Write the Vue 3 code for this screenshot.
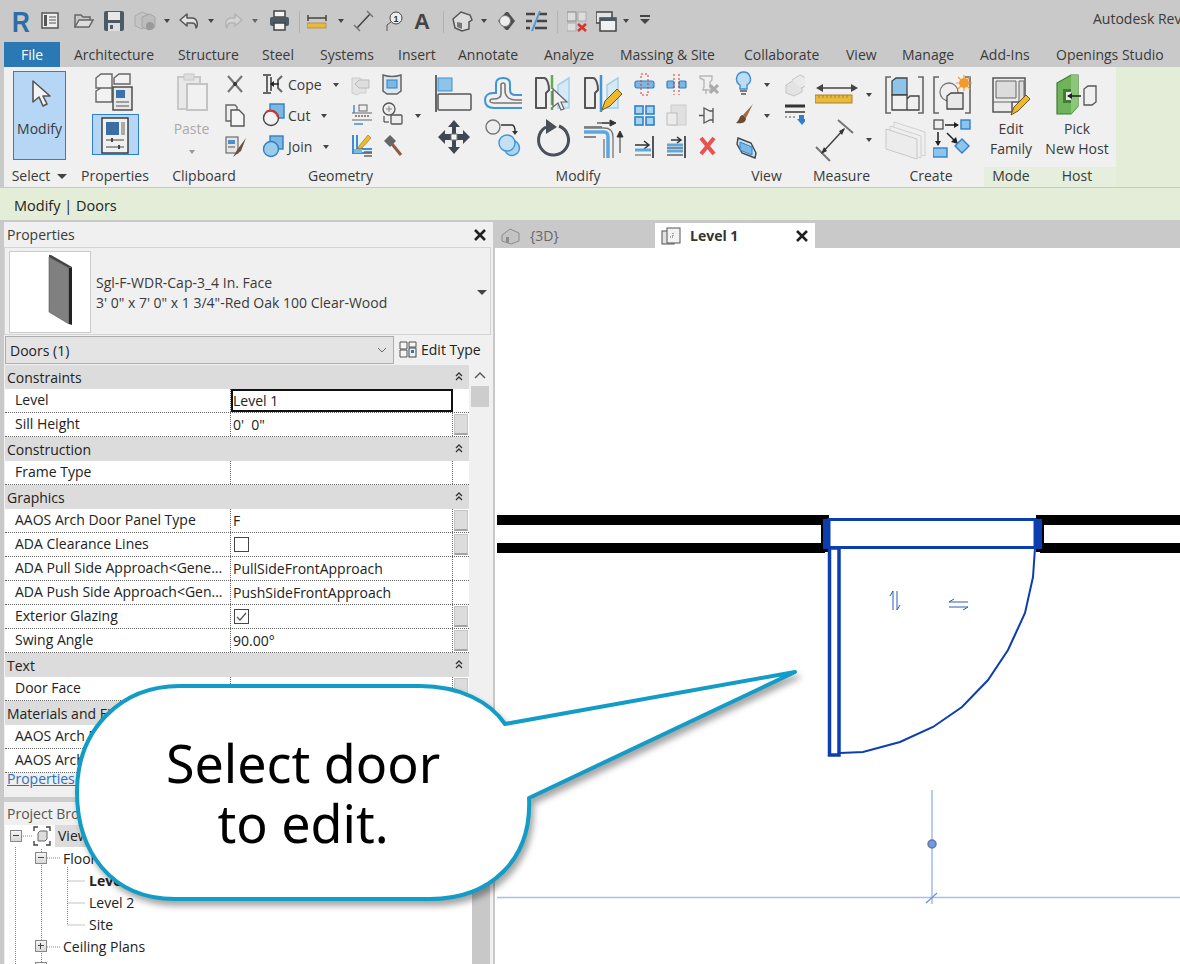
<script setup>
// left edge of each ribbon tab, the tab gets the distance to the next one as width
const tabStarts = [
  ["Architecture", 74], ["Structure", 178], ["Steel", 262], ["Systems", 320], ["Insert", 398], ["Annotate", 458],
  ["Analyze", 544], ["Massing & Site", 620], ["Collaborate", 744], ["View", 846], ["Manage", 902], ["Add-Ins", 980],
  ["Openings Studio", 1056],
];
const tabs = tabStarts.map(([label, x], i) => ({
  label,
  width: (i + 1 < tabStarts.length ? tabStarts[i + 1][1] : 1180) - x,
}));

const rows = [
  { group: "Constraints" },
  { name: "Level", value: "Level 1", active: true },
  { name: "Sill Height", value: "0'  0\"", btn: true },
  { group: "Construction" },
  { name: "Frame Type", value: "" },
  { group: "Graphics" },
  { name: "AAOS Arch Door Panel Type", value: "F", btn: true },
  { name: "ADA Clearance Lines", check: "off", btn: true },
  { name: "ADA Pull Side Approach<Gene...", value: "PullSideFrontApproach" },
  { name: "ADA Push Side Approach<Gen...", value: "PushSideFrontApproach" },
  { name: "Exterior Glazing", check: "on", btn: true },
  { name: "Swing Angle", value: "90.00°", btn: true },
  { group: "Text" },
  { name: "Door Face", value: "", btn: true },
  { group: "Materials and Finishes" },
  { name: "AAOS Arch Door Finish", value: "" },
  { name: "AAOS Arch Frame Finish", value: "" },
];
</script>

<template>
  <div class="app">
    <!-- quick access toolbar -->
    <div class="qat">
      <svg width="29" height="24"><text class="logo" x="0" y="23" transform="scale(.82 1)">R</text></svg>
      <svg width="33" height="24"><rect x="1" y="4" width="16" height="15" fill="#eee" stroke="#555" stroke-width="1.5"/><path d="M3 6h3v11H3z" fill="#555"/><path d="M8 8h7M8 11h7M8 14h7" stroke="#555"/></svg>
      <svg width="30" height="24"><path d="M1 18V6h6l2 2h7v3" fill="none" stroke="#666" stroke-width="1.5"/><path d="M1 18l4-7h14l-4 7z" fill="#ddd" stroke="#666" stroke-width="1.5"/></svg>
      <svg width="30" height="24"><rect x="0" y="2" width="20" height="20" rx="2" fill="#4c5a66"/><rect x="4" y="3" width="12" height="8" fill="#e8e8e8"/><rect x="4" y="14" width="12" height="8" fill="#ddd"/><rect x="6" y="16" width="3" height="4" fill="#4c5a66"/></svg>
      <svg width="30" height="24"><path d="M1 7l7-4 7 3v10l-7 4-7-3z" fill="#c4c4c4" stroke="#aaa"/><path d="M8 8l8-3 5 3v10l-6 3-7-3z" fill="#bcbcbc" stroke="#a5a5a5"/><circle cx="16" cy="17" r="4" fill="#999"/></svg>
      <svg width="15" height="24"><path d="M0 10h6l-3 4z" fill="#444"/></svg>
      <svg width="29" height="24"><path d="M8 5L1 11l7 6v-3h5c3 0 4 2 4 5 2-2 2-10-4-10H8z" fill="#e2e2e2" stroke="#555" stroke-width="1.5" stroke-linejoin="round"/></svg>
      <svg width="17" height="24"><path d="M0 10h6l-3 4z" fill="#444"/></svg>
      <svg width="27" height="24"><path d="M10 5l7 6-7 6v-3H6c-3 0-4 2-4 5-2-2-2-10 4-10h4z" fill="#d4d4d4" stroke="#b4b4b4" stroke-width="1.5" stroke-linejoin="round"/></svg>
      <svg width="17" height="24"><path d="M0 10h6l-3 4z" fill="#666"/></svg>
      <svg width="30" height="24"><rect x="5" y="2" width="11" height="6" fill="#f4f4f4" stroke="#444" stroke-width="1.5"/><rect x="1" y="8" width="19" height="9" rx="2" fill="#4c5a66"/><rect x="5" y="14" width="11" height="7" fill="#f4f4f4" stroke="#444" stroke-width="1.5"/></svg>
      <svg width="8" height="24"><path d="M.5 2v28" stroke="#b2b2b2"/></svg>
      <svg width="31" height="24"><path d="M1 9h18M1 6v6M19 6v6" stroke="#444" stroke-width="1.5"/><rect x="0" y="14" width="19" height="5" fill="#e8b93a" stroke="#a78328" stroke-width=".7"/></svg>
      <svg width="15" height="24"><path d="M0 10h6l-3 4z" fill="#444"/></svg>
      <svg width="32" height="24"><path d="M4 19L17 5" stroke="#444" stroke-width="1.5"/><path d="M1 16l6 6M14 2l6 6" stroke="#777" stroke-width="1.5"/></svg>
      <svg width="29" height="24"><circle cx="11" cy="9" r="6" fill="#eee" stroke="#444"/><text class="tag" x="11" y="12.500">1</text><path d="M6 13l-4 3v6" fill="none" stroke="#555"/></svg>
      <svg width="29" height="24"><text class="big-a" x="0" y="20">A</text></svg>
      <svg width="9" height="24"><path d="M.5 2v28" stroke="#b2b2b2"/></svg>
      <svg width="29" height="24"><path d="M1 10l8-7 9 3 2 5-3 2v7l-7 2-7-3z" fill="#ddd" stroke="#555" stroke-width="1.5"/><path d="M5 13v5l5 2v-6z" fill="#777"/></svg>
      <svg width="17" height="24"><path d="M0 10h6l-3 4z" fill="#444"/></svg>
      <svg width="28" height="24"><path d="M0 12L8 3h2l7 9-7 9H8z" fill="#4e4e4e"/><circle cx="7" cy="12" r="5.500" fill="#eee" stroke="#777"/></svg>
      <svg width="31" height="24"><path d="M0 5h9M13 5h8M0 12h6M11 12h10M0 19h4M9 19h12" stroke="#444" stroke-width="2.500"/><path d="M14 2L6 22" stroke="#4b9bdb" stroke-width="2"/></svg>
      <svg width="10" height="24"><path d="M.5 2v28" stroke="#b2b2b2"/></svg>
      <svg width="29" height="24"><rect x="0" y="3" width="9" height="9" fill="#ddd" stroke="#888"/><rect x="11" y="3" width="8" height="9" fill="#ddd" stroke="#aaa"/><rect x="0" y="14" width="9" height="8" fill="#ddd" stroke="#aaa"/><path d="M11 15l8 7M19 15l-8 7" stroke="#d7322b" stroke-width="2.500"/></svg>
      <svg width="27" height="24"><rect x="0" y="3" width="16" height="11" fill="#e4e4e4" stroke="#444" stroke-width="1.500"/><rect x="4" y="9" width="16" height="13" fill="#f0f0f0" stroke="#444" stroke-width="1.500"/><path d="M4 9h16v3H4z" fill="#4c5a66"/></svg>
      <svg width="17" height="24"><path d="M0 10h6l-3 4z" fill="#444"/></svg>
      <svg width="12" height="24"><path d="M0 7h10" stroke="#444" stroke-width="2"/><path d="M0 10h10l-5 5z" fill="#444"/></svg>
      <span class="title">Autodesk Revit</span>
    </div>

    <!-- ribbon tabs -->
    <nav class="tabs">
      <span class="file">File</span>
      <span v-for="tab in tabs" :key="tab.label" class="tab" :style="{ width: tab.width + 'px' }">{{ tab.label }}</span>
    </nav>

    <!-- ribbon -->
    <div class="ribbon">
      <section class="panel p-select">
        <div class="body">
          <div class="modify-btn">
            <svg width="24" height="34"><path d="M5 5v21l6-5 4 9 4-2-4-8h7z" fill="#f4f4f4" stroke="#555" stroke-width="1.6" stroke-linejoin="round"/></svg>
            <span>Modify</span>
          </div>
        </div>
        <div class="label">Select<i class="dd caret"></i></div>
      </section>

      <section class="panel p-props">
        <div class="body col-center">
          <svg width="40" height="40"><path d="M1 6l5-4h11v14H1zM19 6l5-4h11v10H19zM1 19l5-3h11v14H1z" fill="#f2f2f2" stroke="#666" stroke-width="1.4"/><rect x="18" y="15" width="19" height="23" fill="#e8e8e8" stroke="#444" stroke-width="1.4"/><rect x="21" y="18" width="9" height="8" fill="#3a73ab"/><path d="M21 30h13M21 34h13" stroke="#555"/></svg>
          <div class="props-btn">
            <svg width="34" height="38"><rect x="4" y="2" width="26" height="35" fill="#f0f0f0" stroke="#333" stroke-width="1.4"/><rect x="8" y="6" width="13" height="13" fill="#3a6ea5"/><rect x="23" y="6" width="4" height="13" fill="#aaa"/><path d="M8 24h18M8 31h18" stroke="#444"/><path d="M14 22v4M21 29v4" stroke="#444" stroke-width="2"/></svg>
          </div>
        </div>
        <div class="label">Properties</div>
      </section>

      <section class="panel p-clip">
        <div class="body row">
          <div class="paste">
            <svg width="34" height="40"><path d="M3 5h22v32H3z" fill="#e9e9e9" stroke="#c8c8c8" stroke-width="2"/><rect x="9" y="2" width="10" height="6" fill="#ddd" stroke="#c8c8c8"/><path d="M12 12h20v26H12z" fill="#f1f1f1" stroke="#c4c4c4" stroke-width="2"/></svg>
            <span>Paste</span>
            <i class="dd dim"></i>
          </div>
          <div class="smalls single">
            <svg width="22" height="31"><path d="M3 7l14 16M17 7L3 23" stroke="#777" stroke-width="2.200"/><circle cx="10" cy="15" r="2" fill="#333"/></svg>
            <svg width="22" height="31"><path d="M1 5h9l2 2v14H1z" fill="#eee" stroke="#666" stroke-width="1.4"/><path d="M6 10h8l5 5v11H6z" fill="#f5f5f5" stroke="#555" stroke-width="1.4"/></svg>
            <svg width="22" height="31"><rect x="1" y="6" width="12" height="16" fill="#e6e6e6" stroke="#555"/><rect x="3" y="9" width="7" height="4" fill="#4c8fc9"/><path d="M3 16h7" stroke="#555"/><path d="M8 26l4-7 9-12-5 13z" fill="#6b5340"/></svg>
          </div>
        </div>
        <div class="label">Clipboard</div>
      </section>

      <section class="panel p-geom">
        <div class="body geom">
          <svg width="26" height="31"><path d="M1 6h8M1 24h8M5 6v18M9 8v14M20 7l-4 4v8l4 4" fill="none" stroke="#666" stroke-width="2"/><path d="M9 15h8" stroke="#222" stroke-width="1.5"/><path d="M8 15l4-3v6z" fill="#222"/></svg>
          <span class="g-text">Cope<i class="dd"></i></span>
          <svg width="31" height="31"><path d="M1 9h8l6 5v10H9l-3 2-5-2z" fill="#e3e3e3" stroke="#ccc"/><path d="M18 11H8l-4 4 4 4h10z" fill="#dedede" stroke="#bbb"/></svg>
          <svg width="33" height="31"><path d="M1 6c6 2 12 2 18 0v16l-4 3H5l-4-3z" fill="#dbe6ef" stroke="#666" stroke-width="1.5"/><rect x="5" y="11" width="10" height="8" fill="#7db8e3" stroke="#2f7fc4"/></svg>
          <span></span>

          <svg width="26" height="31"><rect x="8" y="4" width="14" height="14" fill="#7db8e3" stroke="#2f7fc4" stroke-width="1.4"/><circle cx="9" cy="18" r="7.500" fill="#f2f2f2" stroke="#444" stroke-width="1.4"/><path d="M4 12a8 8 0 0 1 12 5" fill="none" stroke="#d9342b" stroke-width="2"/></svg>
          <span class="g-text">Cut<i class="dd"></i></span>
          <svg width="31" height="31"><path d="M3 5v8" stroke="#3c8fd6" stroke-width="1.5"/><rect x="8" y="5" width="8" height="6" fill="#eee" stroke="#666"/><path d="M1 13h20M1 20h20" stroke="#666"/><path d="M4 16h14" stroke="#888" stroke-width="2" stroke-dasharray="2 1"/><path d="M3 24h9" stroke="#3c8fd6" stroke-width="1.5"/></svg>
          <svg width="33" height="31"><circle cx="7" cy="9" r="6" fill="#eee" stroke="#555" stroke-width="1.3"/><path d="M4 9h6M7 6v6" stroke="#888"/><path d="M2 16v6h5" fill="none" stroke="#333"/><rect x="9" y="15" width="11" height="9" rx="1" fill="#eee" stroke="#555" stroke-width="1.3"/></svg>
          <i class="dd"></i>

          <svg width="26" height="31"><rect x="8" y="5" width="13" height="13" fill="#7db8e3" stroke="#2f7fc4" stroke-width="1.4"/><circle cx="9" cy="18" r="7.500" fill="#9accec" stroke="#2f7fc4" stroke-width="1.4"/></svg>
          <span class="g-text">Join<i class="dd"></i></span>
          <svg width="31" height="31"><path d="M2 4v18h19M6 4v14h15" fill="none" stroke="#3c8fd6" stroke-width="2"/><path d="M3 22h8v-4H3z" fill="#7db8e3"/><path d="M8 15l9-11 3 3-9 10-4 1z" fill="#efb92e" stroke="#8a6a1c" stroke-width=".6"/><path d="M13 21h8M13 25h8" stroke="#666" stroke-width="1.5"/></svg>
          <svg width="33" height="31"><path d="M2 10l6-6 6 6-6 6z" fill="#666"/><path d="M10 13l9 11" stroke="#8c5c44" stroke-width="3"/></svg>
          <span></span>
        </div>
        <div class="label">Geometry</div>
      </section>

      <section class="panel p-modify">
        <div class="body row">
          <div class="bigs">
            <svg width="49" height="45"><path d="M1 3v37" stroke="#666" stroke-width="2"/><rect x="3" y="6" width="14" height="13" fill="#8cc4ea" stroke="#3d8fd0"/><rect x="3" y="22" width="33" height="16" rx="1" fill="#efefef" stroke="#555" stroke-width="1.5"/></svg>
            <svg width="51" height="45"><path d="M38 36H10C4 36 1 33 1 28C1 24 4 21 9 21H12V12C12 8 15 6 19 6C23 6 26 8 26 12V18C26 21 28 23 32 23H38" fill="none" stroke="#3d96d8" stroke-width="2"/><path d="M38 28H32C26 28 21 25 21 18V13C21 11 20 11 19 11C18 11 17 11 17 13V22C17 26 14 27 9 27C7 27 6 28 6 29C6 30 8 31 10 31H38" fill="none" stroke="#777" stroke-width="1.6"/></svg>
            <svg width="49" height="45"><path d="M1 6H9C12 6 14 12 14 18L11 21V36H1Z" fill="#eee" stroke="#555" stroke-width="2" stroke-linejoin="round"/><path d="M17 3v37" stroke="#5bb14e" stroke-width="2.500" stroke-dasharray="14 2 14 2 3"/><path d="M34 6L23 13V36H34Z" fill="#d5e9f6" stroke="#a3cfe8" stroke-width="1.5"/><path d="M18 17V35l5-4 3 7 3-1-3-7h6z" fill="#f2f2f2" stroke="#666" stroke-width="1.2"/></svg>
            <svg width="50" height="45"><path d="M1 6H9C12 6 14 12 14 18L11 21V36H1Z" fill="#eee" stroke="#555" stroke-width="2" stroke-linejoin="round"/><path d="M17 3v37" stroke="#3d96d8" stroke-width="2.500"/><path d="M34 6L23 13V36H34Z" fill="#d5e9f6" stroke="#a3cfe8" stroke-width="1.5"/><path d="M18 38l3-9 12-12 5 5-12 12z" fill="#efb92e" stroke="#6b5326" stroke-width="1"/></svg>

            <svg width="49" height="45"><path d="M19 3l6 7h-4v7h7v-4l7 7-7 7v-4h-7v7h4l-6 7-6-7h4v-7h-7v4l-7-7 7-7v4h7v-7h-4z" fill="#3f4750"/><rect x="16" y="17" width="6" height="6" fill="#f4f4f4" stroke="#777"/></svg>
            <svg width="51" height="45"><circle cx="9" cy="10" r="7" fill="#eee" stroke="#777" stroke-width="1.4"/><path d="M17 8H28C31 8 31 12 31 15" fill="none" stroke="#333" stroke-width="1.5"/><path d="M28 14h6l-3 4z" fill="#333"/><circle cx="28" cy="31" r="7.500" fill="#aad4ef" stroke="#3d96d8" stroke-width="1.4"/><circle cx="23" cy="26" r="8" fill="#c4e1f4" stroke="#3d96d8" stroke-width="1.4"/></svg>
            <svg width="49" height="45"><path d="M11 10a15 15 0 1 0 13-1" fill="none" stroke="#4a5058" stroke-width="3"/><path d="M11 2l11 8-11 7z" fill="#4a5058"/></svg>
            <svg width="50" height="45"><path d="M0 10h18M0 20h12M13 6h12" stroke="#666" stroke-width="1.5"/><path d="M0 15h20c3 0 4 2 4 5v21" fill="none" stroke="#5aa8e2" stroke-width="3.500"/><path d="M0 11h20c6 0 9 3 9 9v21M20 22v19" fill="none" stroke="#777" stroke-width="1.300"/><path d="M18 6h8M26 3l6 3-6 3z" fill="#333" stroke="#333"/><path d="M36 36V18M36 14l-3 6h6z" fill="#333" stroke="#333"/></svg>
          </div>
          <div class="smalls triple">
            <svg width="32" height="31"><rect x="1" y="12" width="19" height="7" rx="2" fill="#7cb6e4" stroke="#2f80c9" stroke-width="1.2"/><rect x="7" y="5" width="7" height="21" fill="none" stroke="#d9342b" stroke-dasharray="2 2"/></svg>
            <svg width="32" height="31"><rect x="1" y="12" width="7" height="7" rx="1" fill="#7cb6e4" stroke="#2f80c9" stroke-width="1.2"/><rect x="13" y="12" width="7" height="7" rx="1" fill="#7cb6e4" stroke="#2f80c9" stroke-width="1.2"/><path d="M8 5v21M13 5v21" stroke="#d9342b" stroke-dasharray="2 2"/></svg>
            <svg width="32" height="31"><path d="M2 7h12v4l-2 2v5l2 3H5l1-3v-7L2 9zM8 20v5" fill="none" stroke="#b7b7b7" stroke-width="1.4"/><path d="M12 16l8 8M20 16l-8 8" stroke="#aaa" stroke-width="3"/></svg>

            <svg width="32" height="31"><g fill="#a6d3f1" stroke="#2f80c9" stroke-width="1.6"><rect x="1" y="6" width="8" height="8"/><rect x="12" y="6" width="8" height="8"/><rect x="1" y="17" width="8" height="8"/><rect x="12" y="17" width="8" height="8"/></g></svg>
            <svg width="32" height="31"><rect x="5" y="5" width="15" height="20" fill="#e0e0e0" stroke="#ccc"/><rect x="1" y="13" width="10" height="12" fill="#ececec" stroke="#bbb"/></svg>
            <svg width="32" height="31"><path d="M6 8l6 3h3v9h-3l-6 3zM1 15.500h5M15 8v15" fill="#eee" stroke="#555" stroke-width="1.300"/></svg>

            <svg width="32" height="31"><path d="M19 5v22" stroke="#555" stroke-width="2"/><path d="M1 14h14M10 10l5 4-5 4" fill="none" stroke="#333" stroke-width="1.500"/><path d="M1 19h16" stroke="#5aa8e2" stroke-width="3"/><path d="M1 24h16" stroke="#888" stroke-width="1.500"/></svg>
            <svg width="32" height="31"><path d="M19 5v22" stroke="#555" stroke-width="2"/><path d="M5 9h10M11 6l4 3-4 3" fill="none" stroke="#333" stroke-width="1.500"/><path d="M1 14h16M1 20h16" stroke="#5aa8e2" stroke-width="3"/><path d="M1 17h16M1 24h16" stroke="#666" stroke-width="1.500"/></svg>
            <svg width="32" height="31"><path d="M3 7l13 16M16 7L3 23" stroke="#e8524f" stroke-width="4"/></svg>
          </div>
        </div>
        <div class="label">Modify</div>
      </section>

      <section class="panel p-view">
        <div class="body view-grid">
          <svg width="20" height="31"><path d="M8 3a7 7 0 0 1 4 13v4H5v-4A7 7 0 0 1 8 3z" fill="#bcdcf4" stroke="#3d8fd0" stroke-width="1.400"/><path d="M5 22h7M6 25h5" stroke="#555" stroke-width="1.500"/></svg>
          <i class="dd"></i>
          <svg width="22" height="31"><path d="M1 16l8-5 8 3v9l-8 4-8-3z" fill="#e3e3e3" stroke="#c4c4c4"/><path d="M7 11l8-5 6 3v8l-5 2" fill="#eaeaea" stroke="#c4c4c4"/></svg>

          <svg width="20" height="31"><path d="M18 4L8 15l3 3z" fill="#a8683c"/><path d="M8 15c-4 0-3 5-7 8 5 1 10 0 10-5z" fill="#6b4a33"/></svg>
          <i class="dd"></i>
          <svg width="22" height="31"><path d="M0 6h20" stroke="#333" stroke-width="3"/><path d="M0 12h20" stroke="#666" stroke-width="2"/><path d="M0 17h11" stroke="#555" stroke-dasharray="2 2"/><path d="M14 15h5v4h3l-5 6-5-6h2z" fill="#2f80c9"/></svg>

          <svg width="22" height="31"><path d="M3 7l13 5 5 10-1 5-13-5-5-9z" fill="#cbe4f5" stroke="#444" stroke-width="1.400"/><path d="M5 11l12 5v8L5 19z" fill="#7ab8e8" stroke="#2f80c9"/></svg>
        </div>
        <div class="label">View</div>
      </section>

      <section class="panel p-measure">
        <div class="body measure">
          <svg width="51" height="45"><path d="M5 16h34" stroke="#444" stroke-width="1.500"/><path d="M1 16l7-4v8zM43 16l-7-4v8z" fill="#444"/><rect x="0" y="23" width="37" height="8" fill="#e8b93a" stroke="#a78328"/><path d="M4 23v3M8 23v3M12 23v3M16 23v3M20 23v3M24 23v3M28 23v3M32 23v3" stroke="#a78328"/></svg>
          <i class="dd"></i>
          <svg width="51" height="45"><path d="M7 36L29 12" stroke="#444" stroke-width="1.500"/><path d="M1 30l14 14M23 3l15 13" stroke="#777" stroke-width="2"/><path d="M6 37l3-7 3 4zM30 11l-3 7-3-4z" fill="#333"/></svg>
          <i class="dd"></i>
        </div>
        <div class="label">Measure</div>
      </section>

      <section class="panel p-create">
        <div class="body bigs two">
          <svg width="48" height="45"><path d="M6 5H1v36h5M33 5h5v36h-5" fill="none" stroke="#666" stroke-width="1.600"/><path d="M7 23V9l4-3h11v17z" fill="#8cc4ea" stroke="#444" stroke-width="1.300"/><path d="M7 23h15v15H7zM22 27l3-3h9v14H22z" fill="#f0f0f0" stroke="#444" stroke-width="1.300"/></svg>
          <svg width="47" height="45"><path d="M6 5H1v36h5M32 5h5v36h-5" fill="none" stroke="#666" stroke-width="1.600"/><circle cx="16" cy="20" r="9" fill="#eee" stroke="#777" stroke-width="1.300"/><path d="M14 24l4-3h12v16H14z" fill="#e8e8e8" stroke="#444" stroke-width="1.300"/><circle cx="31" cy="11" r="5" fill="#f39a2e"/><path d="M31 3v16M23 11h16M25 5l12 12M37 5L25 17" stroke="#f39a2e" stroke-width="1.200"/></svg>
          <svg width="48" height="45"><path d="M9 5l31 10v24L9 29z" fill="#efefef" stroke="#d0d0d0"/><path d="M5 9l31 10v22L5 33z" fill="#efefef" stroke="#d0d0d0"/><path d="M1 12l31 10v20L1 32z" fill="#ececec" stroke="#c8c8c8"/></svg>
          <svg width="47" height="45"><rect x="1" y="3" width="9" height="9" fill="#eee" stroke="#444" stroke-width="1.200"/><path d="M12 8h13" stroke="#222" stroke-width="1.500"/><path d="M26 8l-5-3v6z" fill="#222"/><rect x="28" y="3" width="9" height="9" fill="#8cc4ea" stroke="#2f80c9" stroke-width="1.400"/><path d="M5 15v13" stroke="#222" stroke-width="1.500"/><path d="M5 29l-3-5h6z" fill="#222"/><path d="M14 16l9 9" stroke="#222" stroke-width="1.500"/><path d="M25 27l-7-2 5-5z" fill="#222"/><rect x="0" y="31" width="14" height="9" fill="#8cc4ea" stroke="#2f80c9" stroke-width="1.400"/><path d="M29 22l7 7-7 7-7-7z" fill="#8cc4ea" stroke="#2f80c9" stroke-width="1.400"/></svg>
        </div>
        <div class="label">Create</div>
      </section>

      <section class="panel p-mode">
        <div class="body col-center">
          <svg width="38" height="42"><path d="M1 4h32v24h-13v10H1z" fill="#ececec" stroke="#555" stroke-width="1.500"/><path d="M4 7h20v17H4zM27 7h5v21h-5zM1 28h19" fill="#dcdcdc" stroke="#666"/><path d="M19 41l3-8 12-12 4 4-12 12z" fill="#efb92e" stroke="#6b5326"/></svg>
          <span class="tool-text first">Edit</span>
          <span class="tool-text">Family</span>
        </div>
        <div class="label strip">Mode</div>
      </section>

      <section class="panel p-host">
        <div class="body col-center">
          <svg width="42" height="42"><path d="M1 9L15 1h7v31l-7 8H1z" fill="#6fb35a" stroke="#3f7d35" stroke-width="1.200"/><path d="M15 1h7v31l-7 8z" fill="#8cc778"/><rect x="7" y="15" width="8" height="14" fill="#3f7d35"/><rect x="10" y="18" width="5" height="8" fill="#eee"/><path d="M12 22h13" stroke="#222" stroke-width="1.500"/><path d="M11 22l5-3v6z" fill="#222"/><path d="M28 15l4-3h8v16l-4 3h-8z" fill="#f0f0f0" stroke="#555" stroke-width="1.300"/></svg>
          <span class="tool-text first">Pick</span>
          <span class="tool-text">New Host</span>
        </div>
        <div class="label strip">Host</div>
      </section>
    </div>

    <div class="options">Modify | Doors</div>

    <div class="main">
      <!-- left dock -->
      <aside class="side">
        <header class="dock-head">
          <span>Properties</span>
          <svg width="14" height="14"><path d="M2 2l10 10M12 2L2 12" stroke="#222" stroke-width="2.600"/></svg>
        </header>
        <div class="type-box">
          <div class="thumb">
            <svg width="80" height="80"><path d="M39 5l20 11v56L39 60z" fill="#808080" stroke="#555" stroke-width=".6"/><path d="M59 16l3-1v58l-3-1z" fill="#222"/><path d="M39 3h2l21 12-3 1-20-11z" fill="#444"/></svg>
          </div>
          <div class="type-name">
            <div>Sgl-F-WDR-Cap-3_4 In. Face</div>
            <div>3' 0" x 7' 0" x 1 3/4"-Red Oak 100 Clear-Wood</div>
          </div>
          <i class="dd type-dd"></i>
        </div>
        <div class="filter">
          <div class="select">
            <span>Doors (1)</span>
            <svg width="12" height="8"><path d="M2 2l4 4 4-4" fill="none" stroke="#666"/></svg>
          </div>
          <div class="edit-type">
            <svg width="18" height="18"><path d="M1 2h7v7H1zM10 2h7v5h-7zM1 10h7v7H1z" fill="#f5f5f5" stroke="#555"/><rect x="10" y="8" width="7" height="9" fill="#eee" stroke="#444"/><rect x="12" y="10" width="3" height="3" fill="#3a73ab"/></svg>
            <span>Edit Type</span>
          </div>
        </div>

        <div class="table-wrap">
          <div class="table">
            <template v-for="row in rows" :key="row.group || row.name">
              <div v-if="row.group" class="group">
                <span>{{ row.group }}</span>
                <svg width="8" height="10"><path d="M1 4l3-3 3 3M1 8l3-3 3 3" fill="none" stroke="#333" stroke-width="1.300"/></svg>
              </div>
              <div v-else class="prop">
                <div class="prop-name">{{ row.name }}</div>
                <div class="prop-value" :class="{ active: row.active }">
                  <span v-if="row.check" class="check">
                    <svg v-if="row.check === 'on'" width="13" height="13"><path d="M2 7l3 3 6-7" fill="none" stroke="#555" stroke-width="1.200"/></svg>
                  </span>
                  <template v-else>{{ row.value }}</template>
                </div>
                <div class="prop-btn"><i v-if="row.btn"></i></div>
              </div>
            </template>
          </div>
          <div class="scroll">
            <svg width="14" height="10"><path d="M2 7l5-5 5 5" fill="none" stroke="#555" stroke-width="1.400"/></svg>
            <div class="thumb-bar"></div>
          </div>
        </div>

        <div class="help"><a>Properties help</a></div>
        <div class="splitter"></div>

        <header class="dock-head browser-head"><span>Project Browser - Project1</span></header>
        <div class="tree-wrap">
          <div class="tree">
            <svg class="tree-lines" width="100" height="140"><g fill="none" stroke="#888" stroke-dasharray="1 1"><path d="M15.500 22v120M41.500 24v120M67.500 42v58M21 11h11M47 33h14M67.500 56h18M67.500 78h18M67.500 100h18M47 122h14"/></g></svg>
            <div class="node l0">
              <i class="box minus"></i>
              <svg class="view-ico" width="18" height="20"><path d="M1 5V1h4M13 1h4v4M17 15v4h-4M5 19H1v-4" fill="none" stroke="#444" stroke-width="1.400"/><path d="M5 7l2-2h7v8l-2 2H5z" fill="#ddd" stroke="#666"/></svg>
              <span class="hl">Views (all)</span>
            </div>
            <div class="node l1"><i class="box minus"></i><span>Floor Plans</span></div>
            <div class="node l2"><b>Level 1</b></div>
            <div class="node l2"><span>Level 2</span></div>
            <div class="node l2"><span>Site</span></div>
            <div class="node l1"><i class="box plus"></i><span>Ceiling Plans</span></div>
            <div class="node l1"><i class="box plus"></i><span>3D Views</span></div>
          </div>
          <div class="tree-scroll"></div>
        </div>
      </aside>

      <!-- drawing area -->
      <div class="view">
        <div class="view-tabs">
          <div class="vtab">
            <svg width="20" height="18"><path d="M1 8l8-6 9 4v8l-8 3-9-3z" fill="#c4c4c4" stroke="#8c8c8c"/><path d="M5 10v5l3 1v-6z" fill="#8c8c8c"/></svg>
            <span>{3D}</span>
          </div>
          <div class="vtab current">
            <svg width="20" height="18"><rect x="1" y="4" width="12" height="13" fill="#e2e2e2" stroke="#555"/><rect x="6" y="1" width="13" height="15" fill="#f2f2f2" stroke="#555"/><path d="M9 10h3V6" fill="none" stroke="#555" stroke-dasharray="1 1"/></svg>
            <b>Level 1</b>
            <svg class="vclose" width="14" height="14"><path d="M2 2l10 10M12 2L2 12" stroke="#222" stroke-width="2.600"/></svg>
          </div>
        </div>
        <div class="canvas">
          <svg class="drawing" width="685" height="716" viewBox="495 248 685 716">
            <path d="M497 520H825M497 548H825M1040 520H1180M1040 548H1180" stroke="#000" stroke-width="10"/>
            <path d="M821 515h8v37h-8zM1036 515h8v37h-8z" fill="#000"/>
            <rect x="823" y="519" width="6" height="30" fill="#0c3eb0"/>
            <rect x="1035" y="519" width="7" height="30" fill="#0c3eb0"/>
            <rect x="829" y="519.500" width="206" height="28" fill="#fff" stroke="#0c3eb0" stroke-width="3"/>
            <rect x="829.500" y="548" width="9.500" height="207" fill="#fff" stroke="#0c3eb0" stroke-width="3.500"/>
            <polyline points="840,753 863,752 900,742 933,727 962,707 988,680 1008,650 1025,613 1033,577 1035,548" fill="none" stroke="#0c3eb0" stroke-width="2"/>
            <path d="M893 610V591l-3 5M897 591v19l3-5" fill="none" stroke="#2a5cb8"/>
            <path d="M968 602H949l5-3M949 607h19l-5 3" fill="none" stroke="#2a5cb8"/>
            <path d="M497 897.500H1180" stroke="#a6c0ee" stroke-width="1.600"/>
            <path d="M932 790V904" stroke="#a6c0ee" stroke-width="1.600"/>
            <path d="M926 903l11-10" stroke="#6a8fe0" stroke-width="1.200"/>
            <circle cx="932" cy="844" r="4" fill="#6f9be0" stroke="#66789a" stroke-width="1.500"/>
          </svg>
        </div>
      </div>
    </div>

    <!-- callout over everything -->
    <div class="callout">
      <svg class="bubble" width="740" height="260" viewBox="70 665 740 260">
        <path d="M180 686H420C460 686 490 702 505 724L795 672L529 798C532 860 490 899 430 899H175C110 899 77 850 77 792C77 730 120 686 180 686Z" fill="#fff" stroke="#129cc6" stroke-width="4" stroke-linejoin="round"/>
      </svg>
      <p class="callout-text">Select door<br>to edit.</p>
    </div>
  </div>
</template>

<style scoped>
.app {
  position: relative;
  width: 1180px;
  height: 964px;
  overflow: hidden;
  display: flex;
  flex-direction: column;
  background: #c9c9c9;
  color: #3a3a3a;
  font: 14px "Open Sans", "Liberation Sans", sans-serif;
}

svg {
  display: block;
  flex: none;
}

.logo {
  font: bold 30px "Liberation Sans", sans-serif;
  fill: #2b6ea8;
}

.tag {
  font: bold 9px "Liberation Sans", sans-serif;
  text-anchor: middle;
  fill: #333;
}

.big-a {
  font: bold 22px "Liberation Sans", sans-serif;
  fill: #444;
}

.qat {
  display: flex;
  align-items: center;
  height: 42px;
  padding-left: 12px;
  flex: none;
}

.title {
  margin-left: 441px;
  white-space: nowrap;
  position: relative;
  top: -3px;
}

.tabs {
  display: flex;
  align-items: center;
  height: 25px;
  flex: none;
  padding-left: 4px;
  white-space: nowrap;
}

.file {
  width: 56px;
  height: 25px;
  line-height: 25px;
  text-align: center;
  color: #fff;
  background: #2a79b4;
  margin-right: 14px;
  flex: none;
}

.tab {
  flex: none;
}

.ribbon {
  display: flex;
  height: 120px;
  flex: none;
  margin-left: 4px;
  background: #e3edd7;
  border-bottom: 1px solid #c8c8c8;
}

.panel {
  display: flex;
  flex-direction: column;
  background: #f0f0f0;
  flex: none;
}

.body {
  height: 100px;
}

.label {
  height: 20px;
  line-height: 17px;
  text-align: center;
  white-space: nowrap;
}

.label.strip {
  background: #e6eedd;
}

.p-select { width: 71px; }
.p-props { width: 80px; }
.p-clip { width: 98px; }
.p-geom { width: 175px; }
.p-modify { width: 300px; }
.p-view { width: 77px; }
.p-measure { width: 73px; }
.p-create { width: 106px; }
.p-mode { width: 54px; }
.p-host { width: 78px; }

.p-select .body {
  padding: 4px 0 0 9px;
  box-sizing: border-box;
}

.modify-btn {
  width: 53px;
  height: 89px;
  box-sizing: border-box;
  border: 1px solid #2d7fd0;
  background: #b5d6f5;
  display: flex;
  flex-direction: column;
  align-items: center;
  padding-top: 4px;
  gap: 9px;
}

.dd {
  display: inline-block;
  width: 0;
  height: 0;
  border-left: 3.5px solid transparent;
  border-right: 3.5px solid transparent;
  border-top: 4px solid #444;
}

.dd.dim {
  border-top-color: #999;
  margin-top: 5px;
}

.caret {
  margin-left: 7px;
  border-left-width: 5px;
  border-right-width: 5px;
  border-top-width: 5px;
  vertical-align: 2px;
}

.col-center {
  display: flex;
  flex-direction: column;
  align-items: center;
}

.p-props .body {
  padding-top: 5px;
  box-sizing: border-box;
}

.props-btn {
  margin-top: 2px;
  width: 47px;
  height: 41px;
  box-sizing: border-box;
  border: 1px solid #2d7fd0;
  background: #b5d6f5;
  display: flex;
  align-items: center;
  justify-content: center;
}

.row {
  display: flex;
}

.paste {
  width: 70px;
  display: flex;
  flex-direction: column;
  align-items: center;
  padding-top: 5px;
  color: #aaa;
  gap: 7px;
  box-sizing: border-box;
  padding-left: 3px;
}

.smalls {
  display: grid;
  grid-auto-rows: 31px;
  padding-top: 2px;
  height: fit-content;
}

.smalls.triple {
  grid-template-columns: repeat(3, 32px);
}

.geom {
  display: grid;
  grid-template-columns: 26px 63px 31px 33px 7px;
  grid-auto-rows: 31px;
  padding: 2px 0 0 9px;
  box-sizing: border-box;
  align-items: center;
}

.g-text {
  display: flex;
  align-items: center;
  gap: 11px;
}

.p-modify .body {
  padding-left: 7px;
  box-sizing: border-box;
}

.bigs {
  display: grid;
  grid-template-columns: repeat(4, auto);
  grid-auto-rows: 45px;
  padding-top: 5px;
  width: 199px;
  height: fit-content;
}

.view-grid {
  display: grid;
  grid-template-columns: 29px 21px 22px;
  grid-auto-rows: 31px;
  padding: 2px 0 0 7px;
  box-sizing: border-box;
  align-items: center;
}

.measure {
  display: grid;
  grid-template-columns: 51px 8px;
  grid-auto-rows: 45px;
  padding: 5px 0 0 10px;
  box-sizing: border-box;
  align-items: center;
}

.bigs.two {
  grid-template-columns: 48px 47px;
  padding-left: 7px;
  box-sizing: border-box;
  width: auto;
  height: 100px;
}

.p-mode .body,
.p-host .body {
  padding-top: 7px;
  box-sizing: border-box;
}

.tool-text {
  line-height: 20px;
  white-space: nowrap;
}

.tool-text.first {
  margin-top: 3px;
}

.options {
  height: 32px;
  flex: none;
  line-height: 36px;
  padding-left: 14px;
  background: #e3edd7;
  border-bottom: 2px solid #c8c8c8;
  color: #222;
  font-size: 14.500px;
}

.main {
  flex: 1;
  display: flex;
  min-height: 0;
}

.side {
  width: 489px;
  margin-left: 4px;
  margin-right: 2px;
  flex: none;
  background: #f0f0f0;
  display: flex;
  flex-direction: column;
}

.dock-head {
  height: 25px;
  flex: none;
  display: flex;
  align-items: center;
  justify-content: space-between;
  padding: 0 6px 0 3px;
}

.type-box {
  height: 88px;
  flex: none;
  box-sizing: border-box;
  margin-right: 2px;
  padding-top: 2px;
  border: 1px solid #d4d4d4;
  display: flex;
  align-items: center;
  position: relative;
}

.thumb {
  width: 82px;
  height: 82px;
  margin-left: 4px;
  background: #fff;
  border: 1px solid #ccc;
  box-sizing: border-box;
}

.type-name {
  margin-left: 5px;
  padding-top: 2px;
  line-height: 20px;
  white-space: nowrap;
}

.type-dd {
  position: absolute;
  right: 3px;
  top: 42px;
  border-left-width: 5px;
  border-right-width: 5px;
  border-top-width: 5px;
}

.filter {
  height: 30px;
  flex: none;
  display: flex;
  margin-left: 1px;
  padding-top: 1px;
  box-sizing: border-box;
}

.select {
  width: 389px;
  height: 28px;
  box-sizing: border-box;
  background: #e4e4e4;
  border: 1px solid #adadad;
  display: flex;
  align-items: center;
  justify-content: space-between;
  padding: 0 5px 0 4px;
  color: #222;
}

.edit-type {
  display: flex;
  align-items: center;
  gap: 4px;
  margin-left: 5px;
  height: 26px;
  color: #222;
}

.table-wrap {
  display: flex;
  height: 408px;
  flex: none;
  margin-left: 1px;
}

.table {
  width: 464px;
  background: #fff;
  color: #222;
}

.group {
  height: 24px;
  background: #dcdcdc;
  display: flex;
  align-items: center;
  justify-content: space-between;
  padding: 0 6px 0 2px;
}

.prop {
  height: 24px;
  box-sizing: border-box;
  display: flex;
  border-bottom: 1px dotted #666;
  background: #fff;
}

.prop-name {
  width: 226px;
  box-sizing: border-box;
  padding-left: 10px;
  line-height: 22px;
  white-space: nowrap;
  overflow: hidden;
  border-right: 1px dotted #666;
}

.prop-value {
  width: 222px;
  box-sizing: border-box;
  padding-left: 2px;
  line-height: 22px;
  white-space: pre;
  border-right: 1px dotted #666;
  display: flex;
  align-items: center;
}

.prop-value.active {
  outline: 2px solid #111;
  outline-offset: -2px;
  border-right: none;
}

.check {
  width: 15px;
  height: 15px;
  margin-left: 1px;
  box-sizing: border-box;
  border: 1px solid #444;
  display: block;
}

.prop-btn {
  width: 16px;
  flex: none;
  padding: 1px 1px 0;
  box-sizing: border-box;
}

.prop-btn i {
  display: block;
  height: 21px;
  background: #dcdcdc;
  border: 1px solid #c4c4c4;
  border-bottom: 2px solid #a4a4a4;
  box-sizing: border-box;
}

.scroll {
  width: 20px;
  margin-left: 1px;
  display: flex;
  flex-direction: column;
  align-items: center;
  padding-top: 6px;
  box-sizing: border-box;
}

.thumb-bar {
  margin-top: 5px;
  width: 18px;
  height: 21px;
  background: #cdcdcd;
}

.help {
  height: 24px;
  flex: none;
  padding-left: 3px;
  line-height: 12px;
}

.help a {
  color: #2a6fc0;
  text-decoration: underline;
}

.splitter {
  height: 5px;
  flex: none;
  background: #cdcdcd;
}

.browser-head {
  height: 23px;
  color: #555;
}

.tree-wrap {
  flex: 1;
  display: flex;
  min-height: 0;
}

.tree {
  position: relative;
  width: 467px;
  background: #fff;
  margin-left: 1px;
  color: #222;
}

.tree-lines {
  position: absolute;
  left: -5px;
  top: 0;
}

.tree-scroll {
  width: 18px;
  background: #c8c8c8;
}

.node {
  position: relative;
  height: 22px;
  display: flex;
  align-items: center;
  white-space: nowrap;
}

.l0 {
  padding-left: 5px;
}

.l1 {
  padding-left: 30px;
}

.l2 {
  padding-left: 84px;
}

.box {
  display: block;
  width: 12px;
  height: 12px;
  box-sizing: border-box;
  border: 1px solid #888;
  background: linear-gradient(#f4f4f4, #d8d8d8);
  position: relative;
  flex: none;
}

.box::before {
  content: "";
  position: absolute;
  left: 2px;
  right: 2px;
  top: 4px;
  height: 1px;
  background: #444;
}

.box.plus::after {
  content: "";
  position: absolute;
  top: 2px;
  bottom: 2px;
  left: 4px;
  width: 1px;
  background: #444;
}

.l1 .box {
  margin-right: 16px;
}

.view-ico {
  margin-left: 11px;
}

.hl {
  margin-left: 4px;
  padding: 0 3px;
  height: 22px;
  line-height: 22px;
  background: #dcdcdc;
}

.view {
  flex: 1;
  display: flex;
  flex-direction: column;
  min-width: 0;
}

.view-tabs {
  height: 26px;
  flex: none;
  display: flex;
  align-items: flex-end;
  background: #c9c9c9;
}

.vtab {
  width: 160px;
  height: 25px;
  display: flex;
  align-items: center;
  gap: 9px;
  padding-left: 6px;
  box-sizing: border-box;
  color: #666;
}

.vtab.current {
  background: #fff;
  color: #333;
  position: relative;
}

.vclose {
  margin-left: auto;
  margin-right: 6px;
}

.canvas {
  flex: 1;
  background: #fff;
  position: relative;
  min-height: 0;
}

.drawing {
  position: absolute;
  left: 0;
  top: 0;
}

.callout {
  position: absolute;
  left: 77px;
  top: 685px;
  width: 452px;
  height: 215px;
}

.bubble {
  position: absolute;
  left: -7px;
  top: -20px;
  filter: drop-shadow(3px 5px 3px rgba(0, 0, 0, 0.35));
}

.callout-text {
  position: relative;
  margin: 48px 0 0;
  text-align: center;
  font: 52px/60px "Noto Sans", sans-serif;
  color: #000;
}
</style>

<style>
html,
body {
  margin: 0;
  background: #c9c9c9;
}
</style>
